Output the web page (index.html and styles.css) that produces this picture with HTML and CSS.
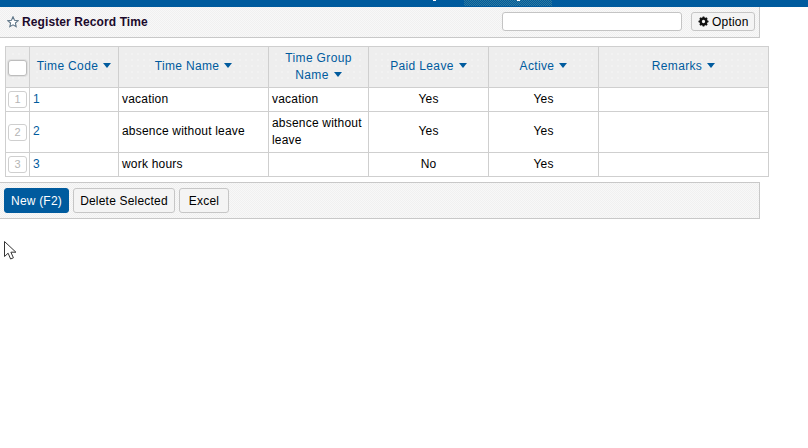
FILE: index.html
```html
<!DOCTYPE html>
<html lang="en">
<head>
<meta charset="utf-8">
<title>Register Record Time</title>
<link rel="stylesheet" href="styles.css">
</head>
<body>
<div class="topbar"><span class="mark mark-a"></span><span class="strip"><span class="mark mark-b"></span></span></div>
<header class="titlebar">
  <h1 class="title">
    <svg class="star" viewBox="0 0 12 12" width="12" height="12"><path d="M6 .8l1.500 3.400 3.700.4-2.800 2.400.8 3.700L6 8.800l-3.200 1.900.8-3.700L.8 4.600l3.700-.4z" fill="#fff" stroke="#5f7688" stroke-width="1.100"/></svg>
    Register Record Time
  </h1>
  <div class="title-tools">
    <input class="search" type="text">
    <button class="btn btn-small"><svg class="gear" viewBox="0 0 12 12" width="11" height="11"><circle cx="6" cy="6" r="3.200" fill="none" stroke="#111" stroke-width="2.800"/><path d="M6 .5v2M6 9.500v2M.5 6h2M9.500 6h2M2.100 2.100l1.400 1.400M8.500 8.500l1.400 1.400M2.100 9.900l1.400-1.400M8.500 3.500l1.400-1.400" stroke="#111" stroke-width="1.800"/></svg>Option</button>
  </div>
</header>
<main class="content">
  <table class="grid">
    <colgroup>
      <col class="c0"><col class="c1"><col class="c2"><col class="c3"><col class="c4"><col class="c5"><col class="c6">
    </colgroup>
    <thead>
      <tr>
        <th><span class="check"></span></th>
        <th><a>Time Code<i class="caret"></i></a></th>
        <th><a>Time Name<i class="caret"></i></a></th>
        <th><a>Time Group Name<i class="caret"></i></a></th>
        <th><a>Paid Leave<i class="caret"></i></a></th>
        <th><a>Active<i class="caret"></i></a></th>
        <th><a>Remarks<i class="caret"></i></a></th>
      </tr>
    </thead>
    <tbody>
      <tr><td class="num"><span class="rownum">1</span></td><td class="code">1</td><td>vacation</td><td>vacation</td><td class="mid">Yes</td><td class="mid">Yes</td><td></td></tr>
      <tr class="tall"><td class="num"><span class="rownum">2</span></td><td class="code">2</td><td class="mid-left">absence without leave</td><td>absence without leave</td><td class="mid">Yes</td><td class="mid">Yes</td><td></td></tr>
      <tr><td class="num"><span class="rownum">3</span></td><td class="code">3</td><td>work hours</td><td></td><td class="mid">No</td><td class="mid">Yes</td><td></td></tr>
    </tbody>
  </table>
</main>
<footer class="toolbar">
  <button class="btn btn-primary">New (F2)</button>
  <button class="btn btn-delete">Delete Selected</button>
  <button class="btn btn-excel">Excel</button>
</footer>
<svg class="cursor" viewBox="0 0 13 19" width="13" height="19"><path d="M.5.5v15l3.600-3.300 2.500 5.800 2.800-1.200-2.500-5.600h5z" fill="#fff" stroke="#333" stroke-width="1"/></svg>
</body>
</html>
```
FILE: styles.css
```css
* { box-sizing: border-box; }
html, body { margin: 0; padding: 0; background: #fff; }
body {
  font-family: "Liberation Sans", Arial, sans-serif;
  font-size: 12px;
  letter-spacing: .2px;
  color: #000;
  height: 448px;
  overflow: hidden;
  position: relative;
}
.topbar { height: 7px; background: #005b9e; display: flex; align-items: flex-start; }
.mark { display: block; width: 3px; height: 1px; background: #fff; flex: none; }
.mark-a { margin-left: 433px; }
.mark-b { margin-left: 53px; }
.strip {
  display: block;
  margin-left: 28px;
  width: 88px;
  height: 6px;
  background: repeating-conic-gradient(#005b9e 0 25%, #2f7a9c 0 50%) 0 0 / 2px 2px;
}
.titlebar {
  width: 760px;
  height: 31px;
  display: flex;
  align-items: center;
  justify-content: space-between;
  padding: 0 4px 1px 7px;
  border-right: 1px solid #c8c8c8;
  border-bottom: 1px solid #c8c8c8;
  background: repeating-conic-gradient(#f0f0f0 0 25%, #f8f8f8 0 50%) 0 0 / 2px 2px;
}
.title {
  margin: 0;
  display: flex;
  align-items: center;
  gap: 3px;
  font-size: 12px;
  font-weight: bold;
  color: #1c0a2c;
  letter-spacing: .1px;
}
.star { flex: none; }
.title-tools { display: flex; align-items: center; gap: 9px; }
.search {
  width: 180px;
  height: 19px;
  padding: 0 4px;
  border: 1px solid #c4c4c4;
  border-radius: 3px;
  background: #fff;
}
.btn {
  height: 25px;
  padding: 0 6px;
  border: 1px solid #c6c6c6;
  border-radius: 3px;
  background: #f4f4f4;
  font: inherit;
  letter-spacing: .2px;
  color: #000;
}
.btn-small {
  height: 19px;
  width: 64px;
  display: flex;
  align-items: center;
  gap: 3px;
  padding: 0 6px;
}
.gear { flex: none; }
.btn-primary { width: 65px; padding: 0; background: #005b9e; border-color: #005b9e; color: #fff; }
.btn-delete { width: 102px; padding: 0; }
.btn-excel { width: 50px; padding: 0; }
.content { padding: 8px 0 0 5px; }
.grid {
  width: 763px;
  table-layout: fixed;
  border-collapse: collapse;
}
.c0 { width: 24px; }
.c1 { width: 89px; }
.c2 { width: 150px; }
.c3 { width: 100px; }
.c4 { width: 120px; }
.c5 { width: 110px; }
.c6 { width: 170px; }
th, td { border: 1px solid #cfcfcf; padding: 0 3px; }
th {
  height: 41px;
  font-weight: normal;
  text-align: center;
  line-height: 17px;
  letter-spacing: .35px;
  color: #005b9e;
  padding: 0 5px 1px;
  background:
    linear-gradient(#eee, #eee) top / 100% 4px no-repeat,
    linear-gradient(#eee, #eee) bottom / 100% 4px no-repeat,
    linear-gradient(#eee, #eee) left / 4px 100% no-repeat,
    linear-gradient(#eee, #eee) right / 4px 100% no-repeat,
    conic-gradient(at 1px 1px, #eee 75%, #fff 0) 0 0 / 6px 6px,
    #eee;
}
th a { color: #005b9e; }
.caret {
  display: inline-block;
  width: 0;
  height: 0;
  margin-left: 5px;
  vertical-align: 2px;
  border-left: 4px solid transparent;
  border-right: 4px solid transparent;
  border-top: 5px solid #005b9e;
}
th:first-child { padding: 0; }
.check {
  display: block;
  width: 19px;
  height: 16px;
  margin: 2px 0 0 2px;
  border: 1px solid #bdbdbd;
  border-radius: 3px;
  background: #fff;
  box-shadow: 0 0 0 1px #e0e0e0;
}
td { height: 24px; line-height: 17px; padding: 3px; }
.num { padding: 0; }
.rownum {
  display: block;
  width: 19px;
  height: 17px;
  margin-left: 2px;
  border: 1px solid #cfcfcf;
  border-radius: 3px;
  text-align: center;
  font-size: 11px;
  line-height: 15px;
  letter-spacing: 0;
  color: #b5b5b5;
}
.code { color: #005b9e; }
.mid { text-align: center; }
.tall .mid, .tall .code, .tall .mid-left { padding-bottom: 5px; }
.toolbar {
  width: 760px;
  height: 37px;
  margin-top: 5px;
  display: flex;
  align-items: center;
  gap: 4px;
  padding: 0 4px;
  border: 1px solid #c8c8c8;
  border-left: 0;
  background: repeating-conic-gradient(#f0f0f0 0 25%, #f8f8f8 0 50%) 0 0 / 2px 2px;
}
.cursor { position: absolute; left: 4px; top: 241px; }
```
